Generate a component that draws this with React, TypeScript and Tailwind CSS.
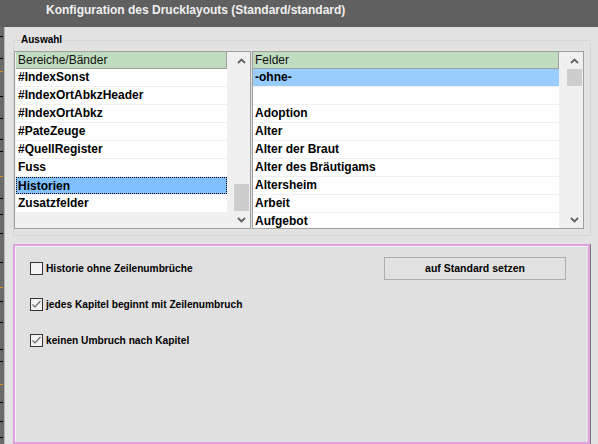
import React from 'react';

const bereiche = [
  '#IndexSonst',
  '#IndexOrtAbkzHeader',
  '#IndexOrtAbkz',
  '#PateZeuge',
  '#QuellRegister',
  'Fuss',
  'Historien',
  'Zusatzfelder',
];

const felder = [
  '-ohne-',
  '',
  'Adoption',
  'Alter',
  'Alter der Braut',
  'Alter des Bräutigams',
  'Altersheim',
  'Arbeit',
  'Aufgebot',
];

// little marks of the desktop showing behind the window edge
const ticks = [36, 58, 71, 96, 118, 139, 151, 176, 198, 214, 233, 262, 287, 301, 322, 349, 361, 384, 402, 421, 437];

function Chevron({ down }: { down?: boolean }) {
  return (
    <svg width="9" height="6" viewBox="0 0 9 6" className={down ? 'rotate-180' : ''}>
      <path d="M1 5 L4.5 1.5 L8 5" fill="none" stroke="#606060" strokeWidth="1.8" />
    </svg>
  );
}

function ScrollBar({ thumbAtEnd, thumbH }: { thumbAtEnd: boolean; thumbH: string }) {
  return (
    <div className="flex w-[17px] flex-col bg-[#f0f0f0]">
      <div className="flex h-[17px] items-center justify-center">
        <Chevron />
      </div>
      <div className={`flex flex-1 flex-col ${thumbAtEnd ? 'justify-end' : 'justify-start'}`}>
        <div className={`mx-px bg-[#cdcdcd] ${thumbH}`} />
      </div>
      <div className="flex h-[17px] items-center justify-center">
        <Chevron down />
      </div>
    </div>
  );
}

interface ListBoxProps {
  header: string;
  items: string[];
  selected: number;
  focused?: boolean;
  className: string;
  rowsClass: string;
  thumbAtEnd: boolean;
  thumbH: string;
}

function ListBox({ header, items, selected, focused, className, rowsClass, thumbAtEnd, thumbH }: ListBoxProps) {
  return (
    <div className={`flex h-[178px] overflow-hidden border border-[#a0a0a0] bg-[#f0f0f0] ${className}`}>
      <div className={`flex flex-col ${rowsClass}`}>
        <div className="h-[17px] border-r border-b border-[#a0a0a0] bg-[#c0dcc0] pl-[2px] text-[12px] leading-[16px] text-[#111111]">
          {header}
        </div>
        {items.map((item, i) => (
          <div
            key={i}
            className={`mb-px h-[17px] shrink-0 pl-[2px] text-[12px] font-bold leading-[17px] text-black ${
              i === selected
                ? focused
                  ? 'border border-dotted border-black bg-[#80c0ff] pl-px leading-[15px]'
                  : 'bg-[#99ccff]'
                : 'bg-white'
            }`}
          >
            {item}
          </div>
        ))}
      </div>
      <div className="flex-1" />
      <ScrollBar thumbAtEnd={thumbAtEnd} thumbH={thumbH} />
    </div>
  );
}

function CheckBox({ checked, label }: { checked: boolean; label: string }) {
  return (
    <div className="flex items-center">
      <div className="flex h-[13px] w-[13px] items-center justify-center border border-[#333333] bg-[#f4f4f4]">
        {checked && (
          <svg width="11" height="11" viewBox="0 0 11 11">
            <path d="M1.5 5.5 L4 8 L9.5 2" fill="none" stroke="#6a6a6a" strokeWidth="1.2" />
          </svg>
        )}
      </div>
      <span className="ml-[3px] text-[10.2px] font-bold leading-[13px] text-black">{label}</span>
    </div>
  );
}

export default function App() {
  return (
    <div className="flex h-[444px] w-[598px] flex-col overflow-hidden bg-[#e2e2e2] font-['Liberation_Sans',Arial,sans-serif]">
      <div className="h-[27px] shrink-0 bg-[#606060] pl-[46px] pt-[2px] text-[12px] font-bold leading-[16px] text-[#f0f0f0]">
        Konfiguration des Drucklayouts (Standard/standard)
      </div>

      <div className="flex flex-1">
        <div className="flex w-[5px] shrink-0">
          <div className="flex w-[4px] flex-col bg-[#6b6b6b]">
            {ticks.map((t, i) => (
              <div
                key={t}
                className={`h-px w-[3px] ${i % 5 === 2 ? 'bg-[#e08a20]' : 'bg-black'}`}
                style={{ marginTop: i === 0 ? t - 27 : t - ticks[i - 1] - 1 }}
              />
            ))}
          </div>
          <div className="w-px bg-[#b8b8b8]" />
        </div>

        <div className="flex flex-1 flex-col pl-[8px]">
          <fieldset className="mt-[7px] w-[578px] border border-[#d6d6d6] pb-[6px] pt-[5px]">
            <legend className="ml-[7px] text-[10px] font-bold leading-[12px] text-black">Auswahl</legend>
            <div className="flex">
              <ListBox
                header="Bereiche/Bänder"
                items={bereiche}
                selected={6}
                focused
                className="w-[237px] pl-px"
                rowsClass="w-[211px]"
                thumbAtEnd
                thumbH="h-[27px]"
              />
              <ListBox
                header="Felder"
                items={felder}
                selected={0}
                className="ml-px w-[332px]"
                rowsClass="w-[306px]"
                thumbAtEnd={false}
                thumbH="h-[17px]"
              />
            </div>
          </fieldset>

          <div className="mt-[8px] flex w-[577px] flex-1 flex-col border-2 border-[#e0a0e0] bg-[#e0e0e0] pl-[15px] pr-[22px] pt-[11px] shadow-[1px_0_0_#7a7a7a,inset_1px_1px_0_#f6f6f6]">
            <div className="flex h-[23px] items-center justify-between">
              <CheckBox checked={false} label="Historie ohne Zeilenumbrüche" />
              <button className="flex h-[23px] w-[182px] items-center justify-center border border-[#adadad] bg-[#e1e1e1] text-[10.5px] font-bold text-black">
                auf Standard setzen
              </button>
            </div>
            <div className="mt-[18px]">
              <CheckBox checked label="jedes Kapitel beginnt mit Zeilenumbruch" />
            </div>
            <div className="mt-[23px]">
              <CheckBox checked label="keinen Umbruch nach Kapitel" />
            </div>
          </div>
        </div>
      </div>
    </div>
  );
}
